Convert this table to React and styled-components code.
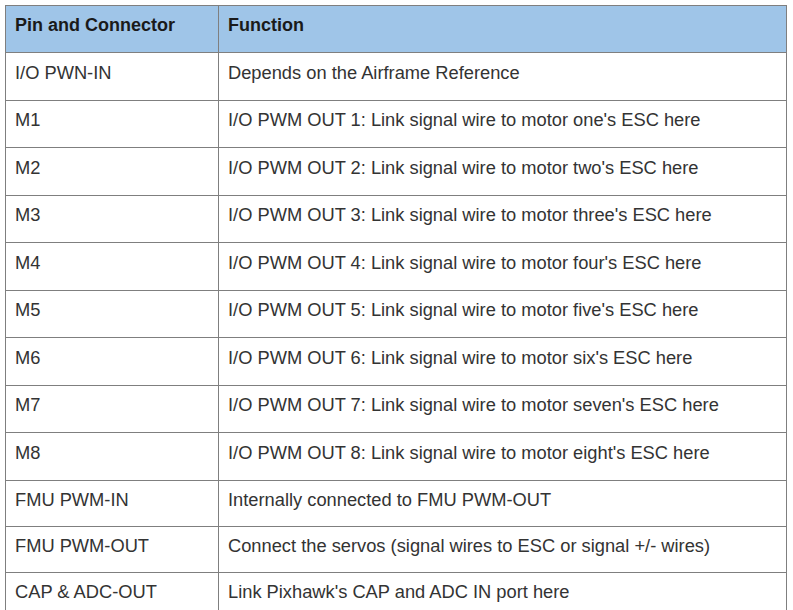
import React from 'react';
import styled, { createGlobalStyle } from 'styled-components';

const GlobalStyle = createGlobalStyle`
  body {
    margin: 0;
    background: #ffffff;
    font-family: 'Liberation Sans', Arial, sans-serif;
  }
`;

const Wrapper = styled.div`
  padding: 5px 0 0 5px;
`;

const Table = styled.table`
  width: 782px;
  border-collapse: collapse;
  table-layout: fixed;
  font-size: 18.3px;
  color: #333333;
`;

const HeadCell = styled.th`
  background: #9fc5e8;
  color: #1a1a1a;
  font-weight: 700;
  font-size: 18px;
  text-align: left;
  border: 1px solid #7f7f7f;
  padding: 9px 9px 16px;
  line-height: 21px;
  height: 21px;
  vertical-align: top;
`;

const Cell = styled.td`
  border: 1px solid #7f7f7f;
  padding: ${(p) => (p.$tight ? '8px 9px 15px' : '8.5px 9px 16px')};
  line-height: 22px;
  height: 22px;
  vertical-align: top;
`;

const rows = [
  ['I/O PWN-IN', 'Depends on the Airframe Reference'],
  ['M1', "I/O PWM OUT 1: Link signal wire to motor one's ESC here"],
  ['M2', "I/O PWM OUT 2: Link signal wire to motor two's ESC here"],
  ['M3', "I/O PWM OUT 3: Link signal wire to motor three's ESC here"],
  ['M4', "I/O PWM OUT 4: Link signal wire to motor four's ESC here"],
  ['M5', "I/O PWM OUT 5: Link signal wire to motor five's ESC here"],
  ['M6', "I/O PWM OUT 6: Link signal wire to motor six's ESC here"],
  ['M7', "I/O PWM OUT 7: Link signal wire to motor seven's ESC here"],
  ['M8', "I/O PWM OUT 8: Link signal wire to motor eight's ESC here"],
  ['FMU PWM-IN', 'Internally connected to FMU PWM-OUT', true],
  ['FMU PWM-OUT', 'Connect the servos (signal wires to ESC or signal +/- wires)', true],
  ['CAP & ADC-OUT', "Link Pixhawk's CAP and ADC IN port here", true],
];

const App = () => {
  return (
    <Wrapper>
      <GlobalStyle />
      <Table>
        <colgroup>
          <col style={{ width: '213px' }} />
          <col />
        </colgroup>
        <thead>
          <tr>
            <HeadCell>Pin and Connector</HeadCell>
            <HeadCell>Function</HeadCell>
          </tr>
        </thead>
        <tbody>
          {rows.map(([pin, fn, tight]) => (
            <tr key={pin}>
              <Cell $tight={tight}>{pin}</Cell>
              <Cell $tight={tight}>{fn}</Cell>
            </tr>
          ))}
        </tbody>
      </Table>
    </Wrapper>
  );
};

export default App;
